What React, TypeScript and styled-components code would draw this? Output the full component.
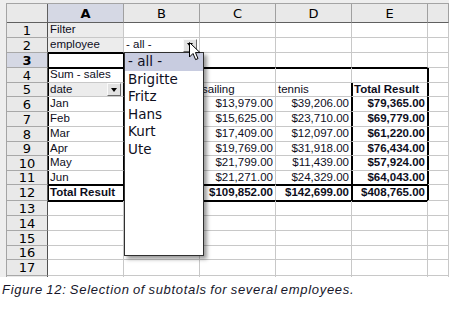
import React from 'react';
import styled, { createGlobalStyle } from 'styled-components';

const GlobalStyle = createGlobalStyle`
  html, body {
    margin: 0;
    padding: 0;
    background: #fff;
  }
`;

// row heights as measured on the screen (the GIF was scaled a little)
const ROW_HEIGHTS = [15, 15, 15, 15, 14, 15, 15, 15, 14, 15, 14, 16, 15, 15, 15, 14, 16, 15];
const COLUMNS = ['A', 'B', 'C', 'D', 'E', ''];
const LAST_LABELLED_ROW = 17;

type CellSpec = {
  text?: string;
  bold?: boolean;
  right?: boolean;
  shade?: boolean;
  button?: boolean;
};

const months = [
  ['Jan', '$13,979.00', '$39,206.00', '$79,365.00'],
  ['Feb', '$15,625.00', '$23,710.00', '$69,779.00'],
  ['Mar', '$17,409.00', '$12,097.00', '$61,220.00'],
  ['Apr', '$19,769.00', '$31,918.00', '$76,434.00'],
  ['May', '$21,799.00', '$11,439.00', '$57,924.00'],
  ['Jun', '$21,271.00', '$24,329.00', '$64,043.00'],
];

const cells: Record<string, CellSpec> = {
  A1: { text: 'Filter', shade: true },
  A2: { text: 'employee', shade: true },
  B2: { text: '- all -', button: true },
  A4: { text: 'Sum - sales' },
  A5: { text: 'date', shade: true, button: true },
  C5: { text: 'sailing' },
  D5: { text: 'tennis' },
  E5: { text: 'Total Result', bold: true },
  A12: { text: 'Total Result', bold: true },
  C12: { text: '$109,852.00', bold: true, right: true },
  D12: { text: '$142,699.00', bold: true, right: true },
  E12: { text: '$408,765.00', bold: true, right: true },
};

months.forEach(([m, c, d, e], i) => {
  const row = i + 6;
  cells[`A${row}`] = { text: m };
  cells[`C${row}`] = { text: c, right: true };
  cells[`D${row}`] = { text: d, right: true };
  cells[`E${row}`] = { text: e, right: true, bold: true };
});

const employees = ['- all -', 'Brigitte', 'Fritz', 'Hans', 'Kurt', 'Ute'];

// thick line between row `row` and row + 1 in column `col` (0 = A)
const hThick = (row: number, col: number) =>
  (col === 0 && row === 2) || (col <= 4 && (row === 3 || row === 11 || row === 12));

// thick line between column `col` and col + 1 in row `row`
const vThick = (col: number, row: number) =>
  (col === -1 && row >= 3 && row <= 12) ||
  (col === 0 && row >= 3 && row <= 12) ||
  (col === 3 && row >= 5 && row <= 12) ||
  (col === 4 && row >= 4 && row <= 12);

type Edges = { t: boolean; r: boolean; b: boolean; l: boolean };

const insets = (e: Edges) => {
  const list: string[] = [];
  if (e.t) list.push('inset 0 1px 0 #000');
  if (e.l) list.push('inset 1px 0 0 #000');
  return list.length ? list.join(', ') : 'none';
};

const Page = styled.div`
  width: 449px;
  height: 315px;
  overflow: hidden;
  background: #fff;
`;

const Window = styled.div`
  position: relative;
  box-sizing: border-box;
  height: 277px;
  padding: 3px 0 0 6px;
  background: #eeeeee;
  overflow: hidden;
`;

const Sheet = styled.div`
  display: grid;
  grid-template-columns: 41px repeat(5, 76px) 1fr;
  grid-template-rows: 19px ${ROW_HEIGHTS.map((h) => `${h}px`).join(' ')};
  height: 273px;
  border-top: 1px solid #a4a4a4;
  border-left: 1px solid #a4a4a4;
  background: #fff;
  overflow: hidden;
`;

const Corner = styled.div`
  box-sizing: border-box;
  background: #e9e9e9;
  border-right: 1px solid #606060;
  border-bottom: 1px solid #606060;
`;

const ColHead = styled.div<{ $active?: boolean }>`
  box-sizing: border-box;
  display: flex;
  align-items: center;
  justify-content: center;
  background: ${({ $active }) => ($active ? '#d5d8e4' : '#e9e9e9')};
  border-right: 1px solid #a0a0a0;
  border-bottom: 1px solid #606060;
  font: ${({ $active }) => ($active ? 700 : 400)} 13px/1 'DejaVu Sans', sans-serif;
  color: #000;
`;

const RowHead = styled.div<{ $active?: boolean }>`
  box-sizing: border-box;
  display: flex;
  align-items: center;
  justify-content: center;
  overflow: hidden;
  background: ${({ $active }) => ($active ? '#d5d8e4' : '#e9e9e9')};
  border-right: 1px solid #505050;
  border-bottom: 1px solid #a8a8a8;
  font: ${({ $active }) => ($active ? 700 : 400)} 13px/1 'DejaVu Sans', sans-serif;
  color: #000;
`;

const Cell = styled.div<{ $edges: Edges; $shade?: boolean; $right?: boolean; $bold?: boolean }>`
  box-sizing: border-box;
  display: flex;
  align-items: center;
  justify-content: ${({ $right }) => ($right ? 'flex-end' : 'flex-start')};
  min-width: 0;
  padding: 0 2px;
  background: ${({ $shade }) => ($shade ? '#ececec' : '#fff')};
  border-right: 1px solid ${({ $edges }) => ($edges.r ? '#000' : '#c8c8c8')};
  border-bottom: 1px solid ${({ $edges }) => ($edges.b ? '#000' : '#c8c8c8')};
  box-shadow: ${({ $edges }) => insets($edges)};
  font: ${({ $bold }) => ($bold ? 700 : 400)} 11.5px/1 'Liberation Sans', Arial, sans-serif;
  color: #0e0e1c;
  white-space: nowrap;
  overflow: hidden;
`;

const DropButton = styled.span`
  display: flex;
  align-items: center;
  justify-content: center;
  flex: none;
  box-sizing: border-box;
  width: 14px;
  height: 13px;
  margin-left: auto;
  background: #e2e2e2;
  border: 1px solid;
  border-color: #fafafa #6a6a6a #6a6a6a #fafafa;

  &::after {
    content: '';
    border-left: 3.5px solid transparent;
    border-right: 3.5px solid transparent;
    border-top: 4px solid #000;
  }
`;

const Dropdown = styled.ul`
  position: absolute;
  left: 124px;
  top: 52px;
  box-sizing: border-box;
  width: 80px;
  height: 204px;
  margin: 0;
  padding: 0;
  list-style: none;
  background: #fff;
  border: 1px solid #303030;
  box-shadow: 3px 3px 4px rgba(0, 0, 0, 0.4);
`;

const Option = styled.li<{ $selected?: boolean }>`
  height: 17.6px;
  padding-left: 3px;
  background: ${({ $selected }) => ($selected ? '#c8cce0' : 'transparent')};
  font: 13.5px/17.6px 'DejaVu Sans', sans-serif;
  color: #10101e;
`;

const Pointer = styled.svg`
  position: absolute;
  left: 189px;
  top: 42px;
`;

const Caption = styled.p`
  margin: 0;
  padding: 5px 0 0 2px;
  font: italic 13px/15px 'Liberation Sans', Arial, sans-serif;
  letter-spacing: 0.7px;
  word-spacing: -1px;
  color: #16162a;
`;

const SheetCell: React.FC<{ row: number; col: number }> = ({ row, col }) => {
  const spec = cells[`${COLUMNS[col]}${row}`] ?? {};
  const edges: Edges = {
    t: hThick(row - 1, col),
    b: hThick(row, col),
    l: vThick(col - 1, row),
    r: vThick(col, row),
  };
  return (
    <Cell $edges={edges} $shade={spec.shade} $right={spec.right} $bold={spec.bold}>
      {spec.text}
      {spec.button && <DropButton />}
    </Cell>
  );
};

export default function App() {
  return (
    <Page>
      <GlobalStyle />
      <Window>
        <Sheet>
          <Corner />
          {COLUMNS.map((c, i) => (
            <ColHead key={i} $active={c === 'A'}>
              {c}
            </ColHead>
          ))}
          {ROW_HEIGHTS.map((_, i) => {
            const row = i + 1;
            return (
              <React.Fragment key={row}>
                <RowHead $active={row === 3}>{row <= LAST_LABELLED_ROW ? row : ''}</RowHead>
                {COLUMNS.map((_, col) => (
                  <SheetCell key={col} row={row} col={col} />
                ))}
              </React.Fragment>
            );
          })}
        </Sheet>
        <Dropdown>
          {employees.map((name, i) => (
            <Option key={name} $selected={i === 0}>
              {name}
            </Option>
          ))}
        </Dropdown>
        <Pointer width="12" height="19" viewBox="0 0 12 19">
          <path
            d="M0.5 0.5 L0.5 15 L4 11.5 L6.6 17.6 L9 16.6 L6.5 10.6 L11 10.6 Z"
            fill="#fff"
            stroke="#000"
            strokeWidth="1"
            strokeLinejoin="miter"
          />
        </Pointer>
      </Window>
      <Caption>Figure 12: Selection of subtotals for several employees.</Caption>
    </Page>
  );
}
